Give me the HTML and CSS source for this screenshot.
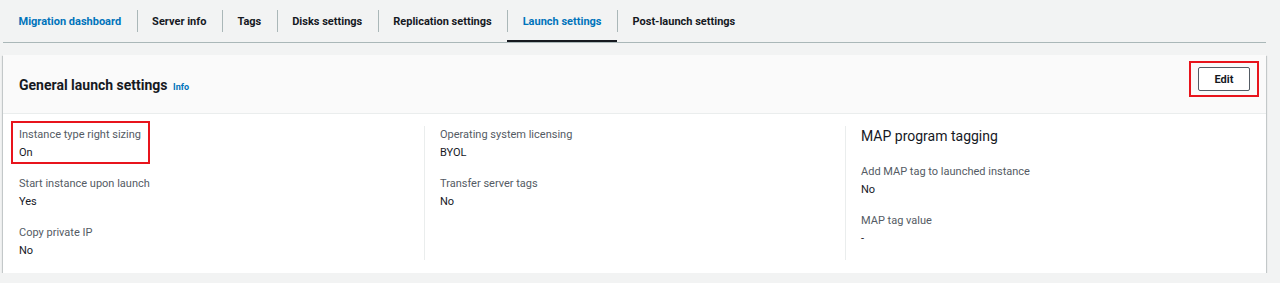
FILE: index.html
```html
<!doctype html>
<html lang="en">
<head>
    <meta charset="utf-8">
    <title>Launch settings</title>
    <link rel="stylesheet" href="styles.css">
</head>
<body>
    <div class="tabs">
        <a class="tab tab_link">Migration dashboard</a>
        <a class="tab">Server info</a>
        <a class="tab">Tags</a>
        <a class="tab">Disks settings</a>
        <a class="tab">Replication settings</a>
        <a class="tab tab_active">Launch settings</a>
        <a class="tab">Post-launch settings</a>
    </div>

    <div class="card">
        <div class="card_header">
            <h2 class="card_title">General launch settings <span class="info">Info</span></h2>
            <div class="mark mark_button">
                <button class="btn">Edit</button>
            </div>
        </div>
        <div class="card_body">
            <div class="col">
                <div class="field mark mark_field">
                    <div class="label">Instance type right sizing</div>
                    <div class="value">On</div>
                </div>
                <div class="field">
                    <div class="label">Start instance upon launch</div>
                    <div class="value">Yes</div>
                </div>
                <div class="field">
                    <div class="label">Copy private IP</div>
                    <div class="value">No</div>
                </div>
            </div>
            <div class="col">
                <div class="field">
                    <div class="label">Operating system licensing</div>
                    <div class="value">BYOL</div>
                </div>
                <div class="field">
                    <div class="label">Transfer server tags</div>
                    <div class="value">No</div>
                </div>
            </div>
            <div class="col">
                <h3 class="col_title">MAP program tagging</h3>
                <div class="field">
                    <div class="label">Add MAP tag to launched instance</div>
                    <div class="value">No</div>
                </div>
                <div class="field">
                    <div class="label">MAP tag value</div>
                    <div class="value">-</div>
                </div>
            </div>
        </div>
    </div>
</body>
</html>
```

FILE: styles.css
```css
body {
    margin: 0;
    background: #f2f3f3;
    color: #16191f;
    font-family: Roboto, "Liberation Sans", sans-serif;
    font-size: 11px;
}

.tabs {
    display: flex;
    align-items: stretch;
    height: 42px;
    margin: 0 14px 0 3px;
    border-bottom: 1px solid #aab7b8;
}

.tab {
    display: flex;
    align-items: center;
    padding: 0 15.5px 0 15.5px;
    font-weight: 700;
    font-size: 11px;
    color: #16191f;
    position: relative;
}

.tab + .tab::before {
    content: "";
    position: absolute;
    left: 0;
    top: 10px;
    bottom: 10px;
    border-left: 1px solid #aab7b8;
}

.tab_link {
    color: #0073bb;
}

.tab_active {
    color: #0073bb;
    box-shadow: inset 0 -2px 0 #16191f;
}

.card {
    margin: 12px 14px 0 3px;
    background: #fff;
    box-shadow: 0 1px 1px 0 rgba(0, 28, 36, 0.3), 1px 1px 1px 0 rgba(0, 28, 36, 0.15), -1px 1px 1px 0 rgba(0, 28, 36, 0.15);
}

.card_header {
    display: flex;
    align-items: center;
    justify-content: space-between;
    height: 58px;
    padding: 0 7px 0 16px;
    background: #fafafa;
    border-bottom: 1px solid #eaeded;
}

.card_title {
    margin: 2px 0 0;
    font-size: 14px;
    font-weight: 700;
}

.info {
    margin-left: 2px;
    font-size: 9px;
    color: #0073bb;
}

.mark {
    border: 2px solid #e8141c;
}

.mark_button {
    align-self: flex-start;
    margin-top: 6px;
    padding: 4px 7px;
}

.btn {
    width: 52px;
    height: 24px;
    background: #fff;
    border: 1px solid #545b64;
    border-radius: 2px;
    font-family: inherit;
    font-size: 11px;
    font-weight: 700;
    color: #16191f;
}

.card_body {
    display: grid;
    grid-template-columns: repeat(3, 1fr);
    padding: 12px 0 13px;
}

.col {
    padding: 0 15px 0 16px;
    min-height: 132px;
}

.col + .col {
    border-left: 1px solid #eaeded;
    padding-left: 15px;
}

.col_title {
    margin: 2px 0 18px;
    font-size: 14px;
    line-height: 17px;
    font-weight: 400;
}

.field {
    margin-bottom: 13px;
}

.field:last-child {
    margin-bottom: 0;
}

.mark_field {
    width: fit-content;
    margin: -5px 0 11px -8px;
    padding: 3px 7px 0 6px;
}

.label {
    line-height: 18px;
    color: #545b64;
}

.value {
    line-height: 18px;
}
```
